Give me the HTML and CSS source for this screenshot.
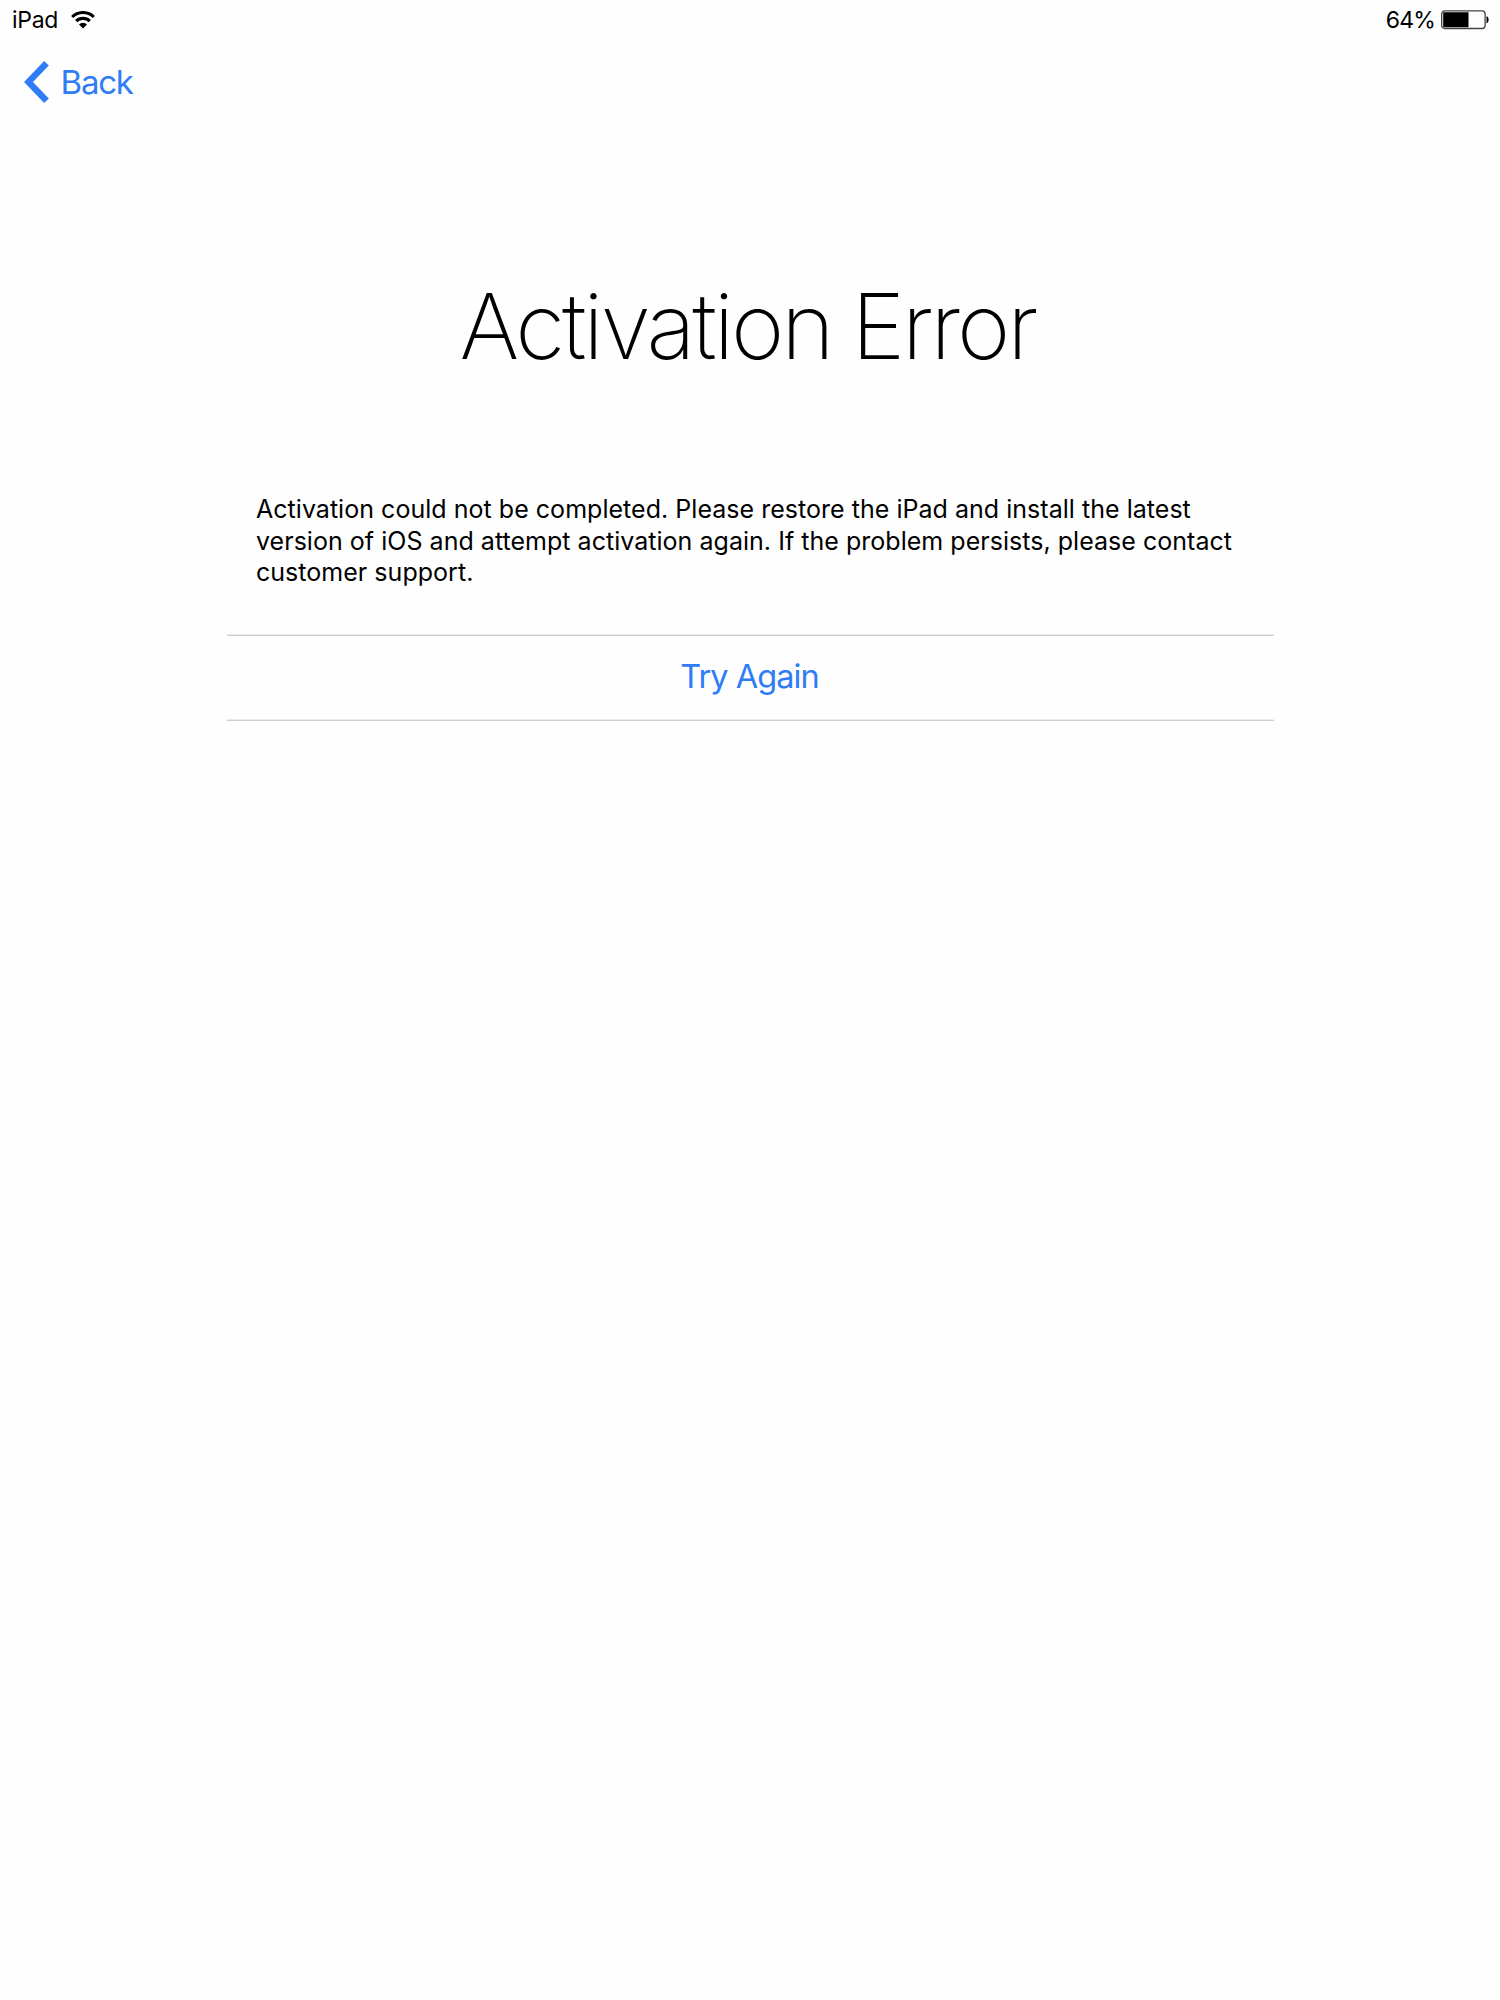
FILE: index.html
```html
<!DOCTYPE html>
<html lang="en">
<head>
<meta charset="utf-8">
<title>Activation Error</title>
<link rel="stylesheet" href="styles.css">
</head>
<body>
<header class="status-bar">
  <div class="status-group">
    <span class="device">iPad</span>
    <svg class="wifi" width="24" height="18" viewBox="0 0 24 18" fill="none" stroke="#000" stroke-width="3.1"><path d="M1.2 6a15.3 15.3 0 0 1 21.6 0M5.200 10.200a9.600 9.600 0 0 1 13.600 0"/><path fill="#000" stroke="none" d="M12 17.500l-4-4a5.650 5.650 0 0 1 8 0z"/></svg>
  </div>
  <div class="status-group">
    <span class="percent">64%</span>
    <svg class="battery" width="48" height="20" viewBox="0 0 48 20"><rect x=".7" y=".9" width="43.400" height="17.600" rx="3" fill="none" stroke="#444" stroke-width="1.300"/><path d="M2.200 2.200h25.300v15H2.200zM45.500 6q2.200.8 2.200 3.700t-2.200 3.700z"/></svg>
  </div>
</header>
<nav class="nav-bar">
  <a class="back">
    <svg class="chevron" width="25" height="42" viewBox="0 0 25 42" fill="none" stroke="#2f7cf6" stroke-width="6.400"><path d="M22.500 2.300L4.500 21l18 18.700"/></svg>
    <span class="back-label">Back</span>
  </a>
</nav>
<main class="content">
  <h1 class="title">Activation Error</h1>
  <p class="message"><span class="line line-1">Activation could not be completed. Please restore the iPad and install the latest</span><span class="line line-2">version of iOS and attempt activation again. If the problem persists, please contact</span><span class="line line-3">customer support.</span></p>
  <button class="retry"><span class="retry-label">Try Again</span></button>
</main>
</body>
</html>
```
FILE: styles.css
```css
* { box-sizing: border-box; }
body { margin: 0; min-height: 2000px; background: #fefefe; color: #000; font-family: Inter, "Liberation Sans", sans-serif; }
.status-bar { height: 40px; padding: 0 11px 0 12px; display: flex; justify-content: space-between; align-items: center; font-size: 23px; }
.status-group { display: flex; align-items: center; }
.device { margin-right: 13px; letter-spacing: -0.3px; }
.percent { margin-right: 6px; font-size: 23px; letter-spacing: -0.8px; }
.nav-bar { height: 83px; padding-left: 24px; display: flex; align-items: center; }
.back { display: flex; align-items: center; gap: 11.5px; color: #2f7cf6; font-size: 33px; letter-spacing: -1.2px; }
.content { width: 1047px; margin: 0 auto; }
.title { margin: 148px 0 0; padding-right: 5px; height: 110px; line-height: 110px; font-size: 91px; font-weight: 200; letter-spacing: -3.1px; word-spacing: -2.5px; text-align: center; white-space: nowrap; }
.message { margin: 113px 0 0; padding: 0 29.5px; font-size: 25px; line-height: 31.5px; letter-spacing: 0.03px; font-variant-ligatures: none; white-space: nowrap; }
.line { display: block; }
.retry { display: block; width: 100%; height: 87px; margin-top: 45.5px; padding: 0 1px 3px 0; border: solid; border-width: 1px 0; border-color: #ebebeb transparent #cfcfcf; box-shadow: inset 0 1px #cfcfcf, inset 0 -1px #ebebeb; background: none; color: #2f7cf6; font: 32.5px Inter, "Liberation Sans", sans-serif; letter-spacing: -0.95px; }
```
